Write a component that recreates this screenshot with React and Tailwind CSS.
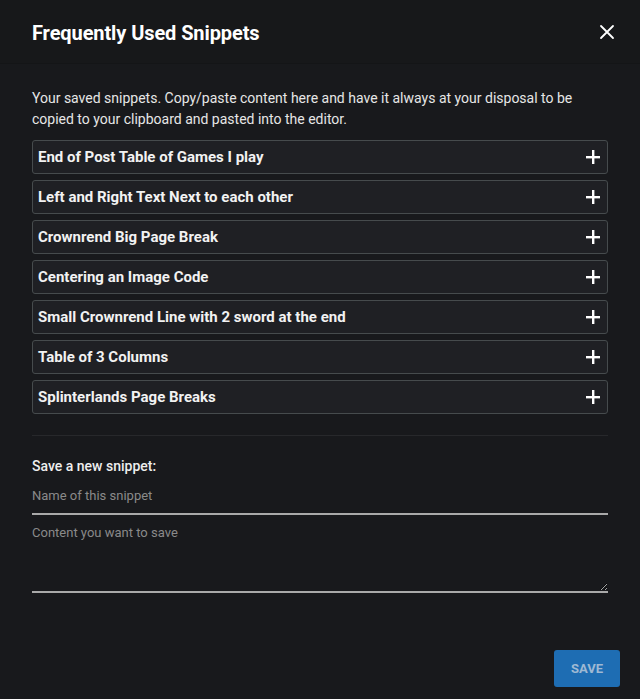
import React from 'react'

const snippets = [
  'End of Post Table of Games I play',
  'Left and Right Text Next to each other',
  'Crownrend Big Page Break',
  'Centering an Image Code',
  'Small Crownrend Line with 2 sword at the end',
  'Table of 3 Columns',
  'Splinterlands Page Breaks',
];

export default function App() {
  return (
    <div
      className="w-[640px] h-[699px] bg-[#18191c] text-white flex flex-col overflow-hidden"
      style={{ fontFamily: 'Roboto, "Liberation Sans", sans-serif' }}
    >
      {/* Header */}
      <div className="h-[64px] shrink-0 flex items-center justify-between pl-8 pr-6 border-b border-[#141517] bg-[#17181a]">
        <h2 className="text-[20px] font-bold tracking-[-0.1px] pt-[2px]">Frequently Used Snippets</h2>
        <button className="text-white">
          <svg className="w-[18px] h-[18px]" viewBox="0 0 24 24" fill="none" stroke="currentColor" strokeWidth={2.4} strokeLinecap="round">
            <path d="M4 4l16 16M20 4L4 20" />
          </svg>
        </button>
      </div>

      {/* Body */}
      <div className="flex-1 px-8 pt-[24px] flex flex-col">
        <p className="text-[14px] leading-[21px] text-[#e6e6e6]">
          Your saved snippets. Copy/paste content here and have it always at your disposal to be copied to your clipboard and pasted into the editor.
        </p>

        <div className="mt-[10px] flex flex-col gap-[6px]">
          {snippets.map((s) => (
            <div
              key={s}
              className="h-[34px] bg-[#1f2024] border border-[#464b4d] rounded-[3px] flex items-center justify-between pl-[5px] pr-[6px]"
            >
              <span className="text-[15px] font-bold text-[#f2f2f2]">{s}</span>
              <svg className="w-[16px] h-[16px]" viewBox="0 0 16 16" fill="currentColor">
                <rect x="7" y="1" width="2.4" height="14" />
                <rect x="1" y="7" width="14" height="2.4" />
              </svg>
            </div>
          ))}
        </div>

        <div className="mt-[21px] border-t border-[#27282b]"></div>

        <div className="mt-[20px] text-[14px] font-medium text-[#eeeeee]">Save a new snippet:</div>

        <input
          className="mt-[10px] h-[28px] bg-transparent border-b-2 border-[#a9a9a9] text-[13px] text-white placeholder-[#8a8a8a] outline-none pb-[10px]"
          placeholder="Name of this snippet"
        />
        <textarea
          className="mt-[8px] h-[70px] bg-transparent border-b-2 border-[#a9a9a9] text-[13px] text-white placeholder-[#8a8a8a] outline-none resize-y"
          placeholder="Content you want to save"
        />

        <div className="flex-1"></div>
        <div className="flex justify-end -mr-[12px] mb-[12px]">
          <button className="w-[66px] h-[37px] rounded-[3px] bg-[#1e6db3] text-[#9fb9d3] text-[13px] font-bold">SAVE</button>
        </div>
      </div>
    </div>
  );
}
